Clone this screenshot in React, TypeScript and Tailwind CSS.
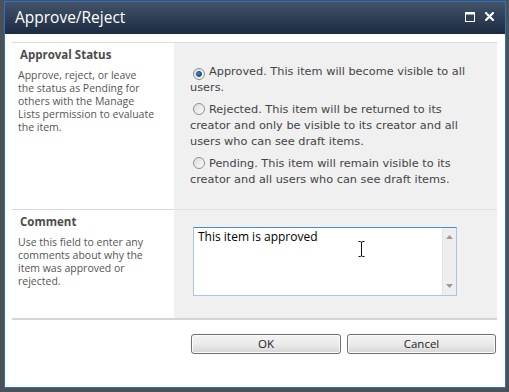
import { useState } from 'react';

const radioText = "font-['DejaVu_Sans',sans-serif] text-[11.3px] leading-[16px] text-[#444]";
const descText = "mt-[7px] -ml-[2px] font-['Open_Sans',sans-serif] text-[10.5px] leading-[13px] text-[#555] whitespace-nowrap";

const Radio = ({ checked }: { checked: boolean }) => (
  <span className="inline-flex items-center justify-center w-[12px] h-[12px] rounded-full border border-[#8f8f8f] bg-gradient-to-br from-[#dcdcdc] to-[#fbfbfb] align-[-2px] mr-[4px] ml-[3px]">
    {checked && (
      <span className="w-[6px] h-[6px] rounded-full bg-gradient-to-br from-[#4aa3ef] to-[#0d4a93] border border-[#0b3f7f]" />
    )}
  </span>
);

const App = () => {
  const [status, setStatus] = useState('approved');
  const [comment, setComment] = useState('This item is approved');

  const options = [
    { id: 'approved', text: 'Approved. This item will become visible to all users.' },
    { id: 'rejected', text: 'Rejected. This item will be returned to its creator and only be visible to its creator and all users who can see draft items.' },
    { id: 'pending', text: 'Pending. This item will remain visible to its creator and all users who can see draft items.' },
  ];

  return (
    <div className="w-[509px] h-[392px] bg-[#4b5158] pl-[4px] pt-[1px] overflow-hidden">
      <div className="w-[502px] h-[387px] border border-[#2a72cc] flex flex-col bg-white">
        {/* Title bar */}
        <div className="h-[32px] shrink-0 bg-gradient-to-b from-[#435369] to-[#1c2b41] flex items-center pl-[10px] pr-[11px]">
          <span className="font-['Open_Sans',sans-serif] text-[15.5px] text-white leading-none -mt-[1px]">Approve/Reject</span>
          <div className="ml-auto flex items-center gap-[10px] -mt-[3px]">
            <svg width="10" height="10" viewBox="0 0 10 10">
              <rect x="0.5" y="0.5" width="9" height="9" fill="none" stroke="#fff" strokeWidth="1" />
              <rect x="0" y="0" width="10" height="2.5" fill="#fff" />
            </svg>
            <svg width="9" height="9" viewBox="0 0 9 9">
              <path d="M1 1 L8 8 M8 1 L1 8" stroke="#fff" strokeWidth="2.2" strokeLinecap="square" />
            </svg>
          </div>
        </div>

        {/* Body */}
        <div className="flex-1 pl-[7px] pr-[8px] pt-[8px]">
          <div className="border-t border-[#dcdcdc]" />

          {/* Approval status */}
          <div className="flex h-[166px]">
            <div className="w-[162px] pl-[8px] pt-[4px] text-[#4c4c4c]">
              <div className="font-['Open_Sans',sans-serif] text-[11.5px] font-bold leading-[15px]">Approval Status</div>
              <p className={descText}>
                Approve, reject, or leave<br />
                the status as Pending for<br />
                others with the Manage<br />
                Lists permission to evaluate<br />
                the item.
              </p>
            </div>
            <div className="flex-1 bg-[#f0f0f1] pt-[21px] pl-[16px] pr-[27px]">
              {options.map((o) => (
                <label
                  key={o.id}
                  onClick={() => setStatus(o.id)}
                  className={`block mb-[6px] cursor-default ${radioText}`}
                >
                  <Radio checked={status === o.id} />
                  {o.text}
                </label>
              ))}
            </div>
          </div>

          <div className="flex">
            <div className="w-[162px] border-t border-[#d9d9d9]" />
            <div className="flex-1 border-t border-[#e2e2e2]" />
          </div>

          {/* Comment */}
          <div className="flex h-[108px]">
            <div className="w-[162px] pl-[8px] pt-[4px] text-[#4c4c4c]">
              <div className="font-['Open_Sans',sans-serif] text-[11.5px] font-bold leading-[15px]">Comment</div>
              <p className={descText}>
                Use this field to enter any<br />
                comments about why the<br />
                item was approved or<br />
                rejected.
              </p>
            </div>
            <div className="flex-1 bg-[#f0f0f1] pt-[17px] pl-[19px]">
              <div className="relative w-[264px] h-[69px] flex bg-white border border-[#a9c5e2] border-t-[#4c8cc8]">
                <textarea
                  value={comment}
                  onChange={(e) => setComment(e.target.value)}
                  className="flex-1 resize-none outline-none px-[4px] pt-[1px] font-['Open_Sans',sans-serif] text-[12px] leading-[15px] text-black bg-white"
                />
                <div className="w-[14px] bg-[#eeeeee] border-l border-[#e4e4e4] flex flex-col items-center justify-between py-[7px]">
                  <svg width="7" height="4" viewBox="0 0 7 4"><path d="M0 4 L3.5 0 L7 4 Z" fill="#9a9a9a" /></svg>
                  <svg width="7" height="4" viewBox="0 0 7 4"><path d="M0 0 L3.5 4 L7 0 Z" fill="#9a9a9a" /></svg>
                </div>
                <svg className="absolute left-[164px] top-[13px]" width="7" height="16" viewBox="0 0 7 16">
                  <path d="M0.5 0.5 H2.5 Q3.5 0.5 3.5 2 V14 Q3.5 15.5 2.5 15.5 H0.5 M6.5 0.5 H4.5 Q3.5 0.5 3.5 2 M3.5 14 Q3.5 15.5 4.5 15.5 H6.5" stroke="#111" strokeWidth="1" fill="none" />
                </svg>
              </div>
            </div>
          </div>

          <div className="border-t-2 border-[#d5d5d5]" />

          {/* Buttons */}
          <div className="flex justify-end gap-[6px] pr-[1px] mt-[14px]">
            {['OK', 'Cancel'].map((b, i) => (
              <button
                key={b}
                className={`${i === 0 ? 'w-[150px]' : 'w-[149px]'} h-[20px] rounded-[3px] border border-[#707070] bg-gradient-to-b from-[#f3f3f3] via-[#ebebeb] to-[#d6d6d6] font-['Open_Sans',sans-serif] text-[11.5px] text-[#222] leading-none shadow-[inset_0_0_0_1px_#fbfbfb]`}
              >
                {b}
              </button>
            ))}
          </div>
        </div>
      </div>
    </div>
  );
};

export default App;
